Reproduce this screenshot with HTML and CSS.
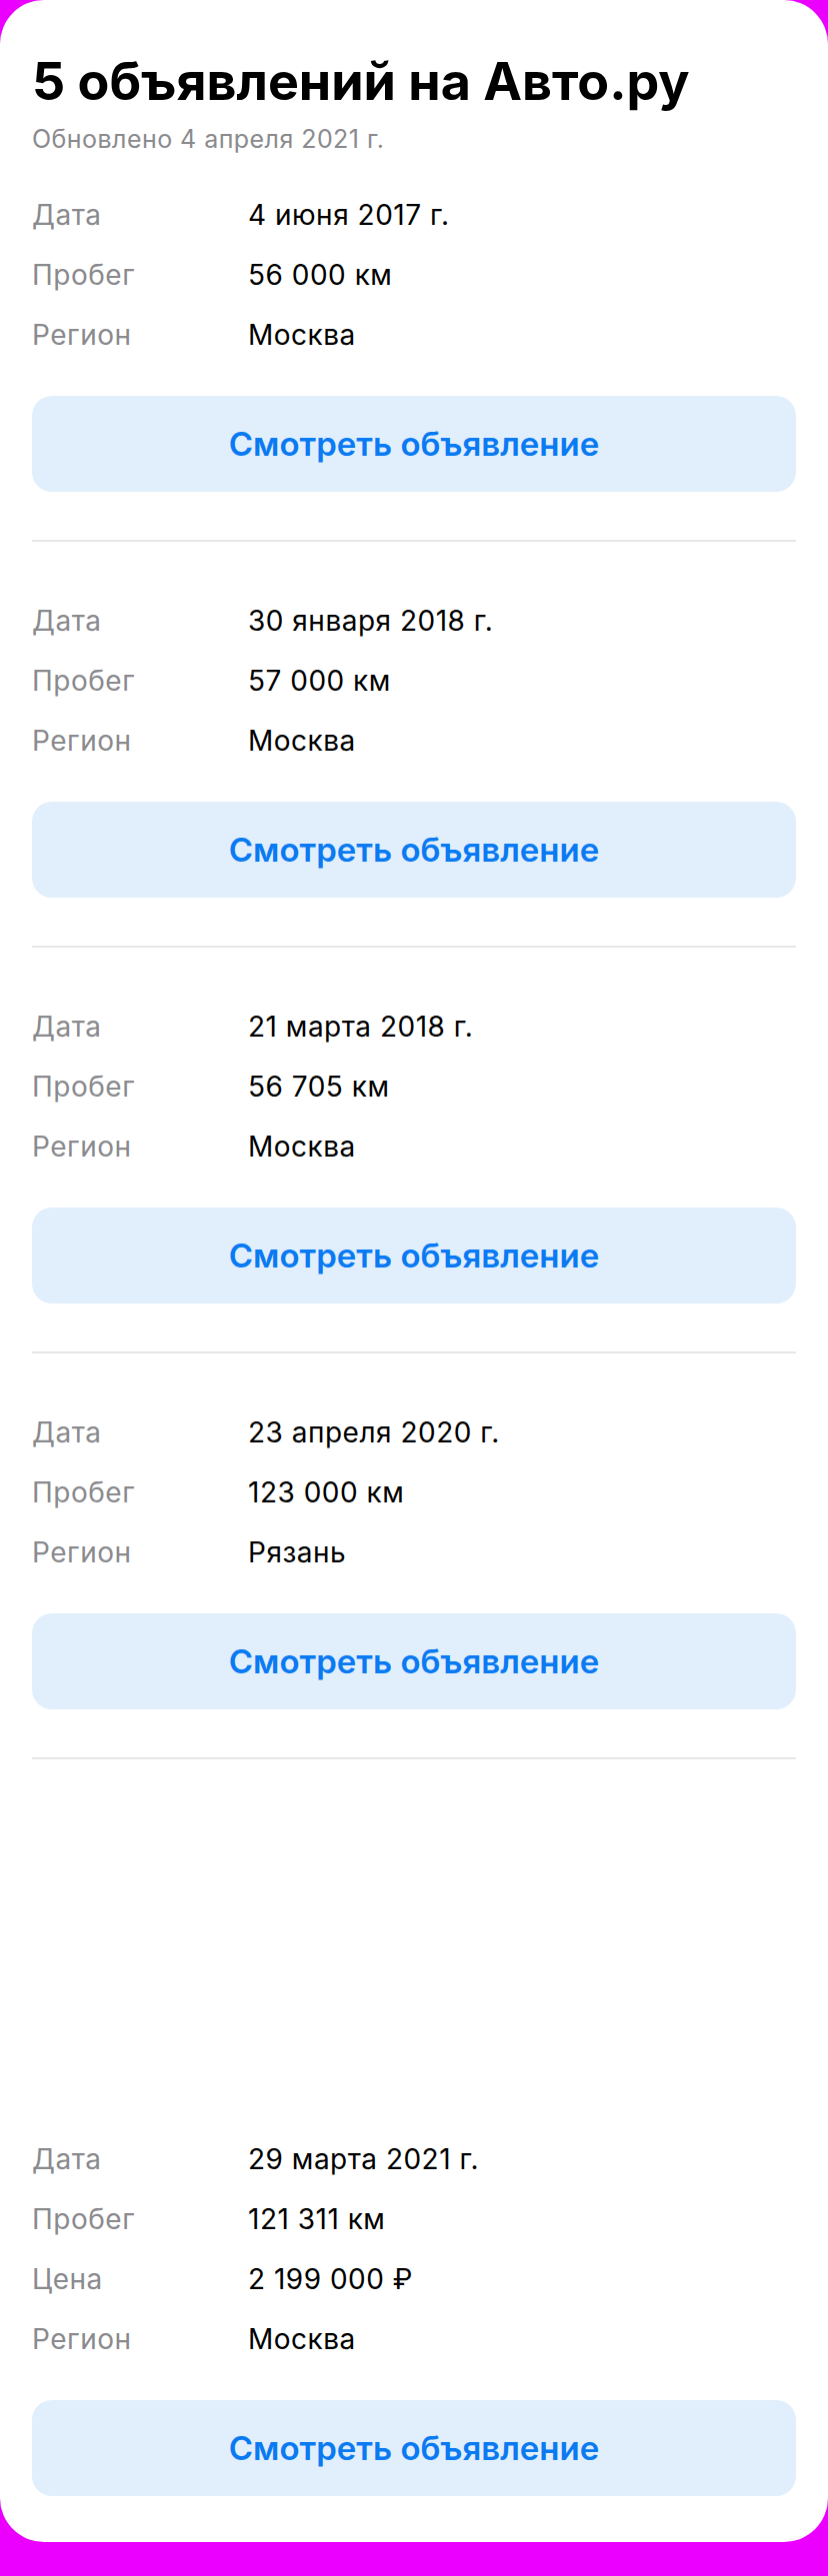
FILE: index.html
```html
<!DOCTYPE html>
<html lang="ru">
<head>
<meta charset="utf-8">
<title>5 объявлений на Авто.ру</title>
<link rel="stylesheet" href="styles.css">
</head>
<body>
<main class="card">
  <header class="head">
    <h1 class="title">5 объявлений на Авто.ру</h1>
    <p class="updated">Обновлено 4 апреля 2021 г.</p>
  </header>

  <section class="listing listing-first">
    <dl class="rows">
      <dt>Дата</dt><dd>4 июня 2017 г.</dd>
      <dt>Пробег</dt><dd>56 000 км</dd>
      <dt>Регион</dt><dd>Москва</dd>
    </dl>
    <button class="btn">Смотреть объявление</button>
  </section>

  <section class="listing">
    <dl class="rows">
      <dt>Дата</dt><dd>30 января 2018 г.</dd>
      <dt>Пробег</dt><dd>57 000 км</dd>
      <dt>Регион</dt><dd>Москва</dd>
    </dl>
    <button class="btn">Смотреть объявление</button>
  </section>

  <section class="listing">
    <dl class="rows">
      <dt>Дата</dt><dd>21 марта 2018 г.</dd>
      <dt>Пробег</dt><dd>56 705 км</dd>
      <dt>Регион</dt><dd>Москва</dd>
    </dl>
    <button class="btn">Смотреть объявление</button>
  </section>

  <section class="listing">
    <dl class="rows">
      <dt>Дата</dt><dd>23 апреля 2020 г.</dd>
      <dt>Пробег</dt><dd>123 000 км</dd>
      <dt>Регион</dt><dd>Рязань</dd>
    </dl>
    <button class="btn">Смотреть объявление</button>
  </section>

  <section class="listing listing-last">
    <div class="photo"></div>
    <dl class="rows">
      <dt>Дата</dt><dd>29 марта 2021 г.</dd>
      <dt>Пробег</dt><dd>121 311 км</dd>
      <dt>Цена</dt><dd>2 199 000 ₽</dd>
      <dt>Регион</dt><dd>Москва</dd>
    </dl>
    <button class="btn">Смотреть объявление</button>
  </section>
</main>
</body>
</html>
```

FILE: styles.css
```css
html, body {
  margin: 0;
  padding: 0;
  background: #eb00ff;
}

body {
  font-family: Inter, "Noto Sans", "Liberation Sans", sans-serif;
  min-height: 2577px;
}

.card {
  background: #ffffff;
  border-radius: 44px;
  padding: 52px 32px 46px;
  display: flex;
  flex-direction: column;
}

.head {
  display: flex;
  flex-direction: column;
}

.title {
  margin: 0;
  font-size: 52px;
  line-height: 60px;
  font-weight: 700;
  color: #000;
}

.updated {
  margin: 11px 0 0;
  font-size: 25px;
  line-height: 32px;
  letter-spacing: 0.45px;
  color: #8a8a8e;
}

.listing {
  display: flex;
  flex-direction: column;
  padding: 49px 0 48px;
  border-bottom: 2px solid #e6e6e8;
}

.listing-first {
  padding-top: 30px;
}

.listing-last {
  border-bottom: none;
  padding-bottom: 0;
}

.photo {
  height: 321px;
}

.rows {
  margin: 0;
  display: grid;
  grid-template-columns: 216px 1fr;
  font-size: 28px;
  line-height: 60px;
  letter-spacing: 0.5px;
}

.rows dt {
  color: #8a8a8e;
}

.rows dd {
  margin: 0;
  color: #000;
}

.btn {
  margin-top: 31px;
  height: 96px;
  border: none;
  border-radius: 20px;
  background: #e1eefc;
  color: #0a7af2;
  font-family: Inter, "Noto Sans", "Liberation Sans", sans-serif;
  font-size: 33px;
  font-weight: 600;
  cursor: pointer;
}
```
